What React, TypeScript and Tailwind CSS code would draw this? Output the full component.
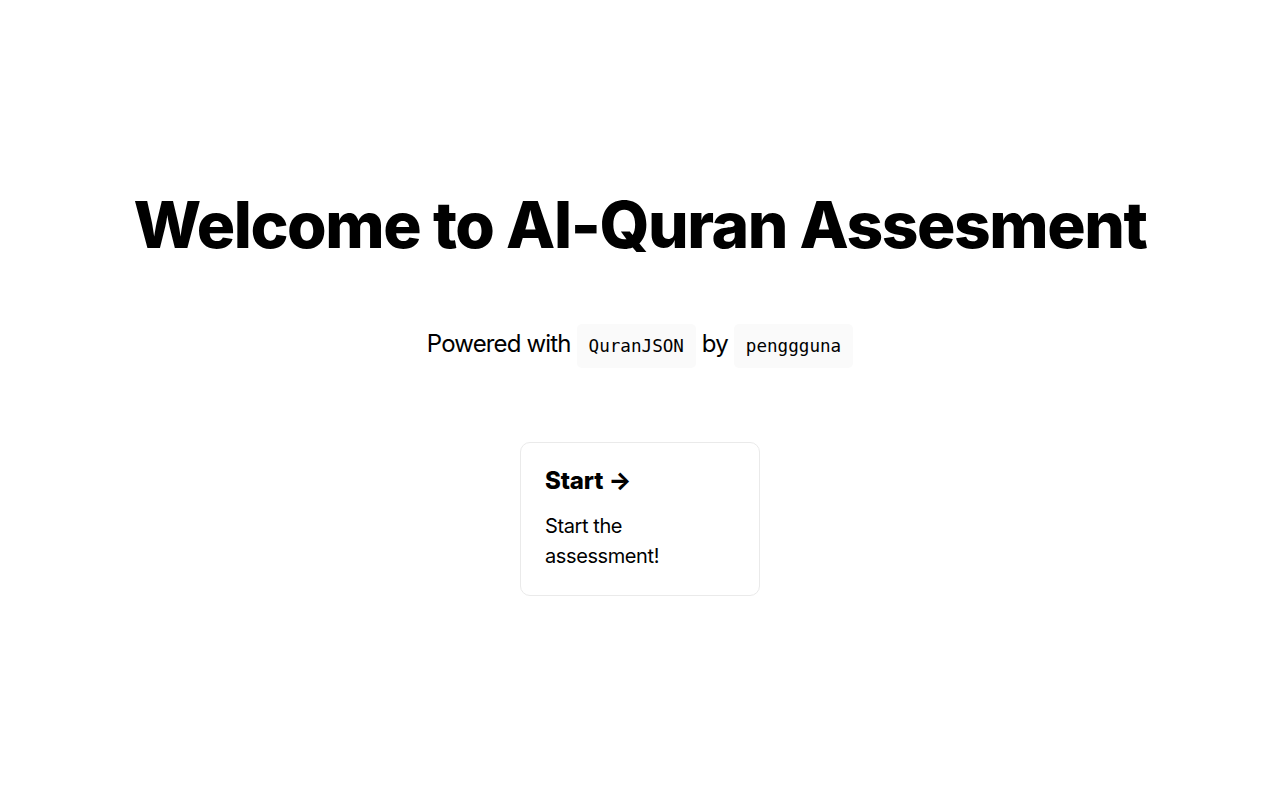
import React from 'react'

const App = () => {
  return (
    <div className="min-h-screen bg-white text-black px-2 flex flex-col items-center justify-center" style={{ fontFamily: 'Inter, "Liberation Sans", sans-serif' }}>
      <main className="flex flex-col items-center justify-center py-20">
        <h1 className="m-0 text-[4rem] leading-[1.15] font-extrabold tracking-[-0.022em] text-center">Welcome to Al-Quran Assesment</h1>

        <p className="my-16 text-2xl leading-normal tracking-[-0.035em] text-center">
          Powered with{' '}
          <code className="bg-[#fafafa] rounded-[5px] p-3 text-[1.1rem] tracking-normal font-['DejaVu_Sans_Mono',monospace]">QuranJSON</code>{' '}
          by{' '}
          <code className="bg-[#fafafa] rounded-[5px] p-3 text-[1.1rem] tracking-normal font-['DejaVu_Sans_Mono',monospace]">penggguna</code>
        </p>

        <div className="flex items-center justify-center flex-wrap max-w-[800px]">
          <a href="#" className="m-4 p-6 w-[240px] text-left border border-[#eaeaea] rounded-[10px] hover:border-[#0070f3] hover:text-[#0070f3]">
            <h2 className="mb-4 text-2xl leading-[1.15] font-extrabold tracking-[-0.005em]">Start &rarr;</h2>
            <p className="m-0 text-xl leading-normal tracking-[-0.02em]">Start the assessment!</p>
          </a>
        </div>
      </main>
    </div>
  )
}

export default App
